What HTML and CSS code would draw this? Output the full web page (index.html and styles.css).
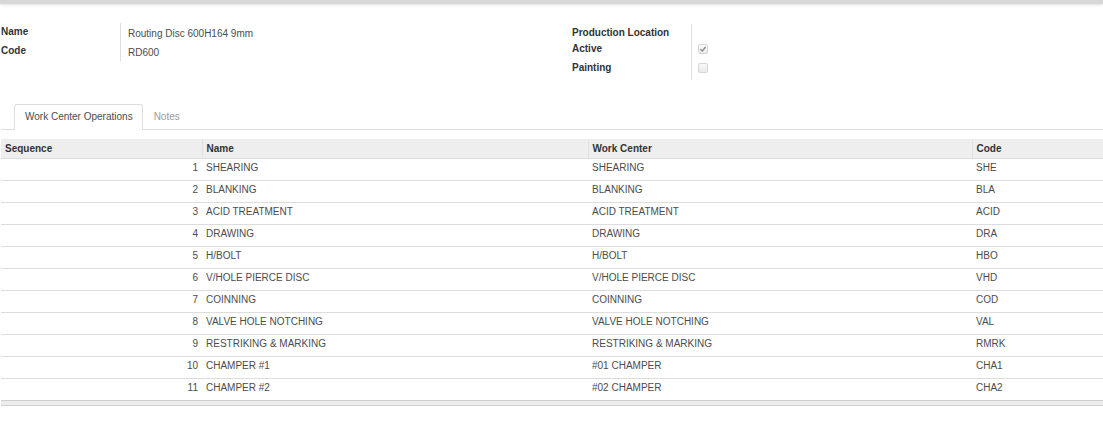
FILE: index.html
```html
<!DOCTYPE html>
<html>
<head>
<meta charset="utf-8">
<link rel="stylesheet" href="styles.css">
</head>
<body>
<div class="topbar"></div>
<div class="sheet">
  <div class="groups">
    <div class="group left">
      <div class="lbl">Name</div><div class="val">Routing Disc 600H164 9mm</div>
      <div class="lbl">Code</div><div class="val">RD600</div>
    </div>
    <div class="group right">
      <div class="lbl first">Production Location</div><div class="val first"></div>
      <div class="lbl">Active</div><div class="val"><span class="cb"><svg viewBox="0 0 10 10" width="10" height="10"><path d="M2.5 5.2 L4.3 7 L7.6 3" fill="none" stroke="#8a8a8a" stroke-width="1.3"/></svg></span></div>
      <div class="lbl last">Painting</div><div class="val last"><span class="cb"></span></div>
    </div>
  </div>
  <ul class="tabs">
    <li class="tab active">Work Center Operations</li>
    <li class="tab">Notes</li>
  </ul>
  <table class="list">
    <colgroup><col class="c1"><col class="c2"><col class="c3"><col class="c4"></colgroup>
    <thead>
      <tr><th>Sequence</th><th>Name</th><th>Work Center</th><th>Code</th></tr>
    </thead>
    <tbody>
      <tr><td class="num">1</td><td>SHEARING</td><td>SHEARING</td><td>SHE</td></tr>
      <tr><td class="num">2</td><td>BLANKING</td><td>BLANKING</td><td>BLA</td></tr>
      <tr><td class="num">3</td><td>ACID TREATMENT</td><td>ACID TREATMENT</td><td>ACID</td></tr>
      <tr><td class="num">4</td><td>DRAWING</td><td>DRAWING</td><td>DRA</td></tr>
      <tr><td class="num">5</td><td>H/BOLT</td><td>H/BOLT</td><td>HBO</td></tr>
      <tr><td class="num">6</td><td>V/HOLE PIERCE DISC</td><td>V/HOLE PIERCE DISC</td><td>VHD</td></tr>
      <tr><td class="num">7</td><td>COINNING</td><td>COINNING</td><td>COD</td></tr>
      <tr><td class="num">8</td><td>VALVE HOLE NOTCHING</td><td>VALVE HOLE NOTCHING</td><td>VAL</td></tr>
      <tr><td class="num">9</td><td>RESTRIKING &amp; MARKING</td><td>RESTRIKING &amp; MARKING</td><td>RMRK</td></tr>
      <tr><td class="num">10</td><td>CHAMPER #1</td><td>#01 CHAMPER</td><td>CHA1</td></tr>
      <tr><td class="num">11</td><td>CHAMPER #2</td><td>#02 CHAMPER</td><td>CHA2</td></tr>
    </tbody>
  </table>
  <div class="listfoot"></div>
</div>
</body>
</html>
```
FILE: styles.css
```css
html, body {
  margin: 0;
  padding: 0;
  background: #fff;
  font-family: "Liberation Sans", Arial, sans-serif;
  font-size: 10px;
  color: #4c4c4c;
}
.topbar {
  height: 4px;
  background: #d8d8d8;
  box-shadow: 0 1px 3px rgba(0,0,0,0.12);
}
.sheet {
  padding: 0 0 0 1px;
}
.groups {
  display: flex;
  align-items: flex-start;
  padding-top: 19px;
}
.group {
  display: grid;
  grid-template-columns: 120px 1fr;
  align-content: start;
}
.group.left {
  width: 571px;
}
.group.right {
  flex: 1;
  margin-top: 1px;
}
.lbl {
  box-sizing: border-box;
  font-weight: bold;
  color: #333;
  height: 19px;
  line-height: 18px;
  border-right: 1px solid #ddd;
}
.val {
  box-sizing: border-box;
  padding-left: 7px;
  height: 19px;
  line-height: 18px;
}
.group.left .val {
  padding-top: 2px;
}
.group.right .val {
  padding-left: 6px;
}
.group.right .first {
  height: 16px;
}
.group.right .last {
  height: 21px;
}
.cb {
  display: inline-block;
  box-sizing: border-box;
  width: 10px;
  height: 10px;
  margin-top: 4px;
  border: 1px solid #d6d6d6;
  border-radius: 2px;
  background: linear-gradient(#fafafa, #e9e9e9);
  vertical-align: top;
  position: relative;
}
.cb svg {
  position: absolute;
  left: -1px;
  top: -1px;
}
.tabs {
  list-style: none;
  margin: 24px 0 0 0;
  padding: 0 0 0 13px;
  display: flex;
  border-bottom: 1px solid #ddd;
  height: 25px;
}
.tab {
  box-sizing: border-box;
  padding: 0 10px;
  line-height: 23px;
  height: 25px;
  color: #999;
  border: 1px solid transparent;
  border-bottom: none;
  border-radius: 3px 3px 0 0;
}
.tab.active {
  color: #4c4c4c;
  border-color: #ddd;
  background: #fff;
  height: 26px;
  padding-right: 9px;
}
.list {
  width: 1102px;
  border-collapse: collapse;
  margin-top: 9px;
  table-layout: fixed;
}
.c1 { width: 201px; }
.c2 { width: 386px; }
.c3 { width: 384px; }
.c4 { width: 131px; }
.list th {
  background: #eee;
  color: #333;
  font-weight: bold;
  text-align: left;
  vertical-align: top;
  height: 19px;
  padding: 0 4px;
  border-bottom: 1px solid #ddd;
  border-left: 1px solid #e2e2e2;
  line-height: 19px;
}
.list th:first-child {
  border-left: none;
}
.list td {
  vertical-align: top;
  height: 21px;
  padding: 0 4px;
  border-bottom: 1px solid #ddd;
  line-height: 17px;
  white-space: nowrap;
}
.list td.num {
  text-align: right;
}
.listfoot {
  position: relative;
  width: 1102px;
  height: 4px;
  margin-top: -1px;
  background: #ededed;
  border-top: 1px solid #cfcfcf;
  border-bottom: 1px solid #cfcfcf;
}
```
